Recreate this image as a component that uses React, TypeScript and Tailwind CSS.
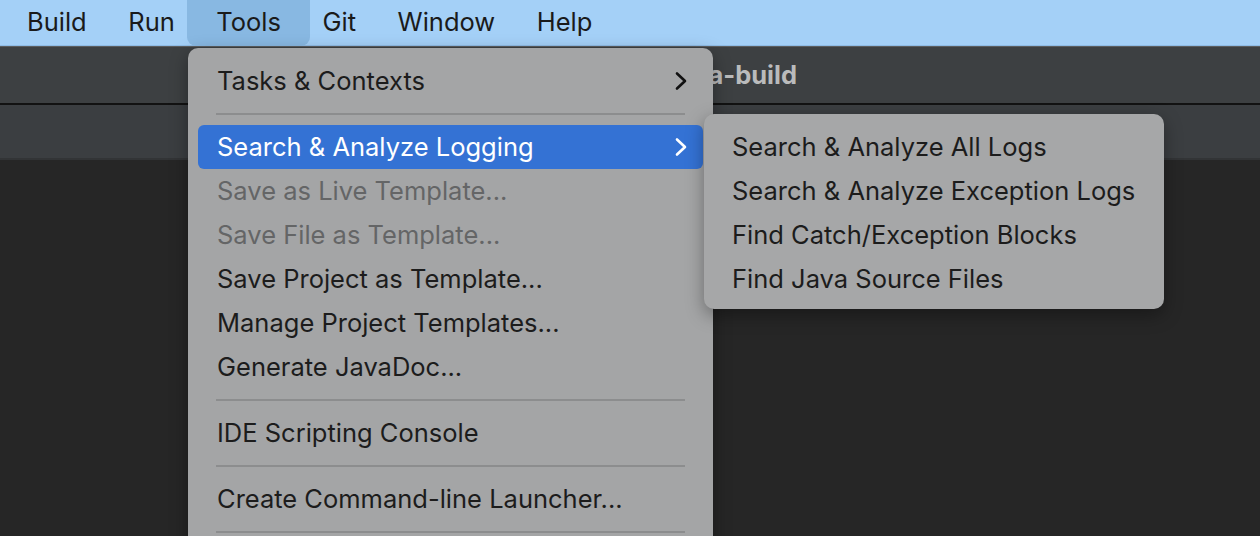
import React from 'react';

type Item =
  | { kind: 'sep' }
  | { kind: 'item'; label: string; disabled?: boolean; active?: boolean; submenu?: boolean };

const toolsMenu: Item[] = [
  { kind: 'item', label: 'Tasks & Contexts', submenu: true },
  { kind: 'sep' },
  { kind: 'item', label: 'Search & Analyze Logging', submenu: true, active: true },
  { kind: 'item', label: 'Save as Live Template...', disabled: true },
  { kind: 'item', label: 'Save File as Template...', disabled: true },
  { kind: 'item', label: 'Save Project as Template...' },
  { kind: 'item', label: 'Manage Project Templates...' },
  { kind: 'item', label: 'Generate JavaDoc...' },
  { kind: 'sep' },
  { kind: 'item', label: 'IDE Scripting Console' },
  { kind: 'sep' },
  { kind: 'item', label: 'Create Command-line Launcher...' },
  { kind: 'sep' },
];

const loggingMenu = [
  'Search & Analyze All Logs',
  'Search & Analyze Exception Logs',
  'Find Catch/Exception Blocks',
  'Find Java Source Files',
];

const menuBar = ['Build', 'Run', 'Tools', 'Git', 'Window', 'Help'];

function Chevron({ light }: { light?: boolean }) {
  return (
    <svg width="14" height="20" viewBox="0 0 14 20" className="shrink-0">
      <polyline
        points="3,2.5 11,10 3,17.5"
        fill="none"
        stroke={light ? '#ffffff' : '#111111'}
        strokeWidth="2.6"
        strokeLinecap="round"
        strokeLinejoin="round"
      />
    </svg>
  );
}

export default function App() {
  return (
    <div
      className="relative h-[536px] w-full overflow-hidden bg-[#262626] text-[25.5px]"
      style={{ fontFamily: 'Inter, "Noto Sans", sans-serif' }}
    >
      {/* macOS menu bar */}
      <div className="flex h-[46px] items-center gap-[41.5px] border-b border-[#8fbce6] bg-[#a4d0f7] pl-[27px] text-[#1a1a1a]">
        {menuBar.map((name) => (
          <span
            key={name}
            className={
              name === 'Tools'
                ? '-mx-[29px] flex h-[46px] items-center rounded-b-[9px] bg-[#88b8e2] px-[29px]'
                : ''
            }
          >
            {name}
          </span>
        ))}
      </div>

      {/* IDE title bar */}
      <div className="h-[57px] border-t border-[#5b5e60] bg-[#3d4042]">
        <div className="w-[797px] pt-[9px] text-right font-bold text-[#babbbc]">java-build</div>
      </div>
      <div className="h-[2px] bg-[#121212]" />

      {/* toolbar */}
      <div className="h-[55px] border-b-2 border-[#323436] bg-[#3b3e41]" />

      {/* Tools dropdown */}
      <div className="absolute left-[188px] top-[48px] w-[525px] rounded-[10px] bg-[#a4a5a6] pt-[11px] pb-[8px] shadow-[0_6px_18px_rgba(0,0,0,0.35)]">
        {toolsMenu.map((it, i) =>
          it.kind === 'sep' ? (
            <div key={i} className="flex h-[22px] items-center px-[28px]">
              <div className="h-[2px] w-full bg-[#8c8d8e]" />
            </div>
          ) : (
            <div
              key={i}
              className={`mx-[10px] flex h-[44px] items-center justify-between rounded-[6px] pl-[19px] pr-[15px] ${
                it.active ? 'bg-[#3472d4] text-white' : it.disabled ? 'text-[#646566]' : 'text-[#1c1c1c]'
              }`}
            >
              <span className="pt-[1px]">{it.label}</span>
              {it.submenu && <Chevron light={it.active} />}
            </div>
          )
        )}
      </div>

      {/* Search & Analyze Logging submenu */}
      <div className="absolute left-[704px] top-[114px] w-[460px] rounded-[10px] bg-[#a6a7a8] pt-[11px] pb-[8px] shadow-[0_6px_18px_rgba(0,0,0,0.35)]">
        {loggingMenu.map((label) => (
          <div key={label} className="mx-[10px] flex h-[44px] items-center pl-[18px] pt-[1px] text-[#1c1c1c]">
            {label}
          </div>
        ))}
      </div>
    </div>
  );
}
